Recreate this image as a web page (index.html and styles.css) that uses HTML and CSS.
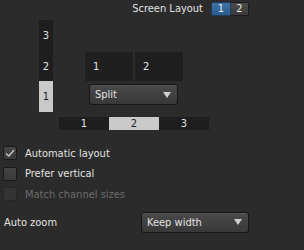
FILE: index.html
```html
<!DOCTYPE html>
<html lang="en">
<head>
    <meta charset="UTF-8">
    <title>Screen Layout</title>
    <link rel="stylesheet" href="styles.css">
</head>
<body>

<div class="top-bar">
    <span class="top-label">Screen Layout</span>
    <div class="toggle">
        <span class="toggle-btn active">1</span>
        <span class="toggle-btn">2</span>
    </div>
</div>

<div class="preview">
    <div class="preview-top">
        <div class="vstrip">
            <span class="cell">3</span>
            <span class="cell">2</span>
            <span class="cell selected">1</span>
        </div>
        <div class="panes-col">
            <div class="panes">
                <div class="pane">1</div>
                <div class="pane">2</div>
            </div>
            <div class="dropdown split-select">
                <span>Split</span>
                <span class="arrow"></span>
            </div>
        </div>
    </div>
    <div class="hstrip">
        <span class="cell">1</span>
        <span class="cell selected">2</span>
        <span class="cell">3</span>
    </div>
</div>

<div class="options">
    <label class="check-row">
        <span class="checkbox checked">
            <svg width="12" height="12" viewBox="0 0 12 12"><path d="M2 6.5 L4.8 9 L10 3" fill="none" stroke="#c9c9c9" stroke-width="1.3"/></svg>
        </span>
        Automatic layout
    </label>
    <label class="check-row">
        <span class="checkbox"></span>
        Prefer vertical
    </label>
    <label class="check-row disabled">
        <span class="checkbox"></span>
        Match channel sizes
    </label>
</div>

<div class="zoom-row">
    <span class="zoom-label">Auto zoom</span>
    <div class="dropdown zoom-select">
        <span>Keep width</span>
        <span class="arrow"></span>
    </div>
</div>

</body>
</html>
```

FILE: styles.css
```css
body {
    margin: 0;
    background-color: #2b2b2b;
    color: #e2e2e2;
    font-family: "DejaVu Sans Condensed", "DejaVu Sans", sans-serif;
    font-stretch: condensed;
    font-size: 11px;
}

.top-bar {
    display: flex;
    justify-content: flex-end;
    align-items: flex-start;
    height: 18px;
    padding: 2px 55px 0 0;
}

.top-label {
    margin-right: 8px;
    line-height: 13px;
}

.toggle {
    display: flex;
    height: 14px;
}

.toggle-btn {
    width: 18px;
    text-align: center;
    line-height: 12px;
    border: 1px solid #1c1c1c;
    background: linear-gradient(#4a4a4a, #3a3a3a);
    color: #e8e8e8;
}

.toggle-btn.active {
    background: linear-gradient(#3e72a8, #2c5a8c);
    border-color: #1e3b5c;
    border-radius: 2px 0 0 2px;
}

.toggle-btn + .toggle-btn {
    width: 17px;
    border-left: none;
    border-radius: 0 2px 2px 0;
}

/* preview */

.preview-top {
    display: flex;
    margin-left: 39px;
}

.vstrip {
    display: flex;
    flex-direction: column;
    width: 14px;
    height: 92px;
    background-color: #1e1e1e;
}

.vstrip .cell {
    flex: 1;
    display: flex;
    align-items: center;
    justify-content: center;
}

.cell.selected {
    background-color: #c9c9c9;
    color: #1e1e1e;
}

.panes-col {
    margin-left: 32px;
    padding-top: 32px;
}

.panes {
    display: flex;
    gap: 2px;
}

.pane {
    width: 40px;
    height: 29px;
    padding-left: 8px;
    line-height: 29px;
    background-color: #1f1f1f;
}

.dropdown {
    display: flex;
    justify-content: space-between;
    align-items: center;
    box-sizing: border-box;
    padding: 0 6px 0 5px;
    border: 1px solid #161616;
    border-radius: 3px;
    background: linear-gradient(#4a4a4a, #383838);
    box-shadow: inset 0 1px 0 #555;
}

.arrow {
    width: 0;
    height: 0;
    border-left: 4px solid transparent;
    border-right: 4px solid transparent;
    border-top: 6px solid #d0d0d0;
}

.split-select {
    width: 89px;
    height: 21px;
    margin-top: 3px;
    margin-left: 4px;
}

.hstrip {
    display: flex;
    width: 150px;
    height: 13px;
    margin: 5px 0 0 59px;
    background-color: #1e1e1e;
}

.hstrip .cell {
    flex: 1;
    text-align: center;
    line-height: 13px;
}

/* options */

.options {
    display: flex;
    flex-direction: column;
    margin-top: 13px;
    padding-left: 3px;
}

.check-row {
    display: flex;
    align-items: center;
    height: 20.5px;
}

.checkbox {
    display: flex;
    align-items: center;
    justify-content: center;
    box-sizing: border-box;
    width: 14px;
    height: 14px;
    margin-right: 8px;
    border: 1px solid #1a1a1a;
    border-radius: 2px;
    background: linear-gradient(#444, #3a3a3a);
}

.check-row.disabled {
    color: #6c6c6c;
}

.check-row.disabled .checkbox {
    background: #343434;
    border-color: #262626;
}

.zoom-row {
    display: flex;
    align-items: center;
    margin-top: 7px;
    padding-left: 4px;
}

.zoom-label {
    width: 137px;
}

.zoom-select {
    width: 108px;
    height: 21px;
}
```
